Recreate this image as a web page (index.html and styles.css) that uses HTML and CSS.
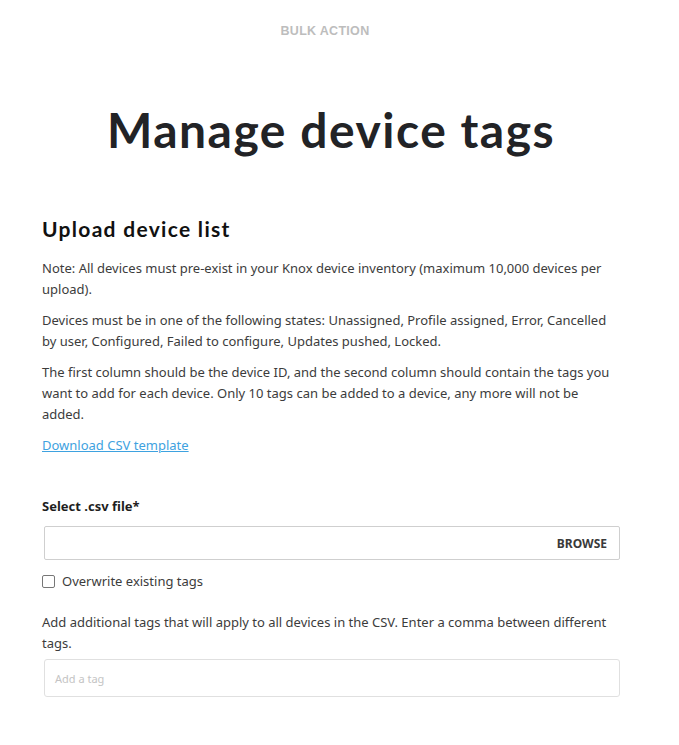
FILE: index.html
```html
<!DOCTYPE html>
<html lang="en">
<head>
<meta charset="utf-8">
<title>Manage device tags</title>
<link rel="stylesheet" href="styles.css">
</head>
<body>
<main class="page">
  <div class="eyebrow">BULK ACTION</div>
  <h1 class="title">Manage device tags</h1>
  <h2 class="section-title">Upload device list</h2>
  <p class="text">Note: All devices must pre-exist in your Knox device inventory (maximum 10,000 devices per upload).</p>
  <p class="text">Devices must be in one of the following states: Unassigned, Profile assigned, Error, Cancelled by user, Configured, Failed to configure, Updates pushed, Locked.</p>
  <p class="text">The first column should be the device ID, and the second column should contain the tags you want to add for each device. Only 10 tags can be added to a device, any more will not be added.</p>
  <a class="link" href="#">Download CSV template</a>

  <div class="field-label">Select .csv file*</div>
  <div class="file-input"><span class="browse">BROWSE</span></div>
  <label class="check"><span class="box"></span><span>Overwrite existing tags</span></label>

  <p class="text help">Add additional tags that will apply to all devices in the CSV. Enter a comma between different tags.</p>
  <div class="tag-input">Add a tag</div>
</main>
</body>
</html>
```
FILE: styles.css
```css
html, body {
  margin: 0;
  padding: 0;
  background: #fff;
}
body {
  font-family: "Noto Sans", "Open Sans", sans-serif;
  color: #3c3c3c;
}
.page {
  width: 578px;
  margin-left: 42px;
  display: flex;
  flex-direction: column;
}
.eyebrow {
  align-self: center;
  margin-top: 23px;
  margin-left: -12px;
  font-family: "Liberation Sans", sans-serif;
  font-weight: bold;
  font-size: 12.5px;
  letter-spacing: 0.3px;
  color: #bdbdbd;
  line-height: 16px;
}
.title {
  align-self: center;
  margin: 63px 0 0 0;
  font-family: Lato, sans-serif;
  font-weight: 700;
  font-size: 48px;
  line-height: 56px;
  color: #222326;
  letter-spacing: 1.5px;
}
.section-title {
  margin: 57px 0 15px 0;
  font-family: Lato, sans-serif;
  font-weight: 700;
  font-size: 21px;
  line-height: 28px;
  color: #111;
  letter-spacing: 1.3px;
}
.text {
  margin: 0 0 10px 0;
  font-size: 13px;
  line-height: 21px;
  color: #3c3c3c;
}
.link {
  align-self: flex-start;
  margin-top: 0;
  font-size: 13px;
  line-height: 21px;
  color: #3ea2e0;
  text-decoration: underline;
}
.field-label {
  margin-top: 40px;
  font-weight: 700;
  font-size: 13px;
  line-height: 21px;
  color: #1e1e1e;
}
.file-input {
  margin: 9px 0 0 2px;
  height: 32px;
  border: 1px solid #cfcfcf;
  border-radius: 2px;
  display: flex;
  align-items: center;
  justify-content: flex-end;
  padding-right: 12px;
}
.browse {
  font-weight: 700;
  font-size: 12px;
  color: #3a3a3a;
}
.check {
  margin-top: 13px;
  display: flex;
  align-items: center;
  gap: 7px;
  font-size: 13px;
  line-height: 16px;
  color: #3c3c3c;
}
.box {
  width: 11px;
  height: 11px;
  border: 1px solid #777;
  border-radius: 2px;
}
.help {
  margin-top: 23px;
  margin-bottom: 5px;
}
.tag-input {
  margin-left: 2px;
  height: 36px;
  border: 1px solid #e0e0e0;
  border-radius: 3px;
  display: flex;
  align-items: center;
  padding-left: 10px;
  font-size: 11px;
  color: #c4c4c4;
}
```
